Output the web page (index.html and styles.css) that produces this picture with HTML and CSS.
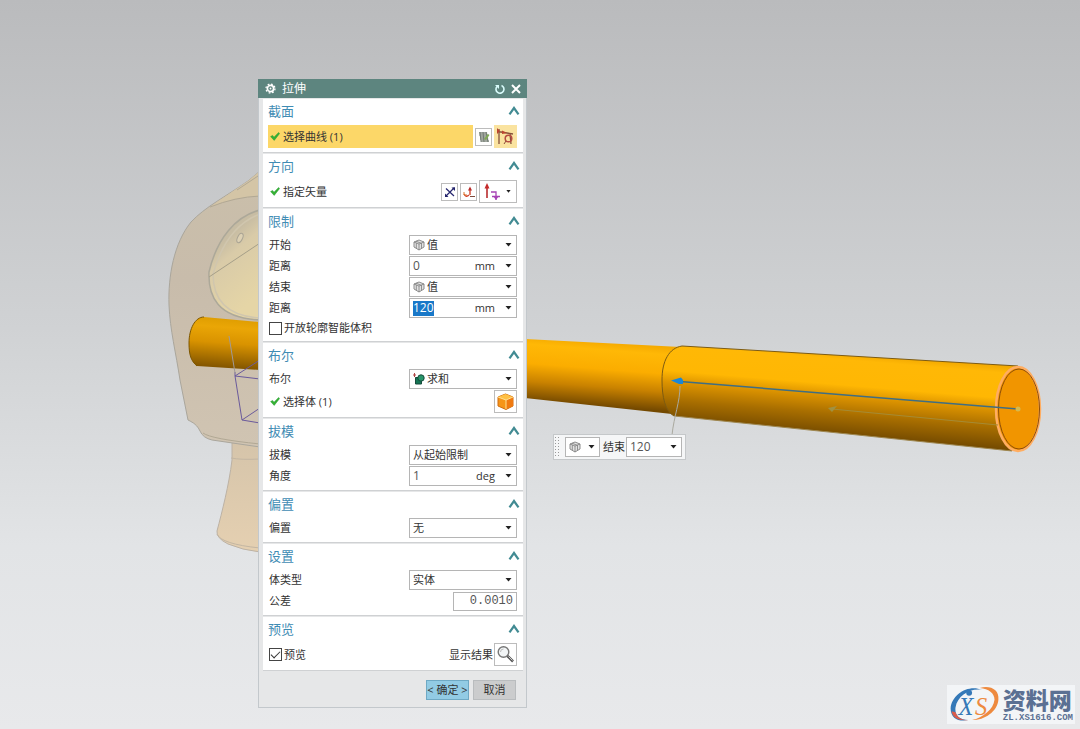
FILE: index.html
```html
<!DOCTYPE html>
<html lang="zh-CN">
<head>
<meta charset="utf-8">
<title>拉伸</title>
<link rel="stylesheet" href="styles.css">
</head>
<body>
<svg class="defs" aria-hidden="true">
  <symbol id="caret" viewBox="0 0 7 4"><path d="M0.5 0h6L3.5 3.6z" fill="#222"/></symbol>
  <symbol id="chev" viewBox="0 0 12 9"><path d="M1.500 8.300 6 2l4.500 6.300" fill="none" stroke="#428b93" stroke-width="2.200"/></symbol>
  <symbol id="check" viewBox="0 0 10 9"><path d="M.6 4.600 2.600 3.400 4 5.200 8.600.5 9.600 1.600 4.200 8.400z" fill="#35b233" stroke="#2a9a36" stroke-width=".5"/></symbol>
  <symbol id="cube" viewBox="0 0 12 12"><path d="M1 3 6 1l5 2v5l-5 3-5-3z" fill="#e2e2e2" stroke="#8c8c8c"/><path d="M1 3l5 2 5-2M6 5v6M3.300 4v5M8.500 4v5M3 2.200l5 2" fill="none" stroke="#7c7c7c" stroke-width=".8"/></symbol>
</svg>

<main class="viewport">
  <svg class="scene" viewBox="0 0 1080 729" preserveAspectRatio="xMinYMin slice" role="img" aria-label="模型视图">
    <defs>
      <linearGradient id="rod" gradientUnits="userSpaceOnUse" x1="854" y1="352" x2="847" y2="436">
        <stop offset="0" stop-color="#efa500"/><stop offset=".1" stop-color="#ffb806"/><stop offset=".4" stop-color="#ffb703"/><stop offset=".54" stop-color="#dc9300"/><stop offset=".75" stop-color="#a86e00"/><stop offset="1" stop-color="#754b00"/>
      </linearGradient>
      <linearGradient id="rod2" gradientUnits="userSpaceOnUse" x1="602" y1="342" x2="597" y2="406">
        <stop offset="0" stop-color="#f5aa00"/><stop offset=".12" stop-color="#ffb806"/><stop offset=".42" stop-color="#fbad00"/><stop offset=".7" stop-color="#c98200"/><stop offset="1" stop-color="#744900"/>
      </linearGradient>
      <linearGradient id="rod3" gradientUnits="userSpaceOnUse" x1="228" y1="317" x2="224" y2="369">
        <stop offset="0" stop-color="#dd9c00"/><stop offset=".2" stop-color="#eaa606"/><stop offset=".5" stop-color="#d99300"/><stop offset="1" stop-color="#7e5200"/>
      </linearGradient>
      <linearGradient id="shell" x1="0" y1="0" x2="0" y2="1">
        <stop offset="0" stop-color="#cabfaa"/><stop offset=".4" stop-color="#c8bcab"/><stop offset="1" stop-color="#d0c4b2"/>
      </linearGradient>
      <linearGradient id="bore" x1="0" y1="0" x2=".4" y2="1">
        <stop offset="0" stop-color="#b9b3a6"/><stop offset=".35" stop-color="#c8bda3"/><stop offset=".5" stop-color="#d9cba8"/><stop offset="1" stop-color="#e5d5a6"/>
      </linearGradient>
      <linearGradient id="neck" x1="0" y1="0" x2="0" y2="1">
        <stop offset="0" stop-color="#d5c4aa"/><stop offset="1" stop-color="#e5d0b1"/>
      </linearGradient>
    </defs>
    <path d="M232 440v20C229 485 222 512 217 531q-1 7 11 13 14 6 32 8V440z" fill="url(#neck)" stroke="#bcb2a5"/>
    <path d="M217 534q4 10 43 14M231 458q10 2 29 1" fill="none" stroke="#c3b6a3"/>
    <path d="M260 171 248 181C225 197 205 207 191 222 174 243 168 276 169 305c1 25 7 48 11 75l8 40c6 3 9 5 12 11q3 7 12 9l48 7z" fill="url(#shell)" stroke="#aaa69c"/>
    <path d="M260 171 248 181C235 190 221 199 210 207q25-10 50-11z" fill="#d4c5a6"/>
    <path d="M210 207q25-10 50-11M203 433q8 6 57 11M258 176l-21 14" fill="none" stroke="#b1a894"/>
    <path d="M260 210c-24 6-43 28-51 62-1 24 8 46 51 48z" fill="url(#bore)" stroke="#aca899" stroke-width="1.500"/>
    <path d="M260 214c-22 8-38 28-47 60 0 24 12 42 47 44" fill="none" stroke="#d0c6ae" stroke-width="1.500"/>
    <path d="M209 277 260 243" stroke="#a69f88"/>
    <ellipse cx="240" cy="238" rx="2.500" ry="5" fill="#ddd1b4" stroke="#aaa494" transform="rotate(25 240 238)"/>
    <path d="M204 317 260 322V370L197 366C191 361 189 355 189 343 189 329 195 317 204 317z" fill="url(#rod3)"/>
    <path d="M204 317c-9 0-15 12-15 26 0 12 2 18 8 23" fill="none" stroke="#7d5600"/>
    <path d="M235 372v4L242 420 260 423M235 376 260 379M235 376 260 360M242 420 260 408" fill="none" stroke="#6a5a9c"/>
    <path d="M229 336 235 373" stroke="#a09a99"/>
    <path d="M525 339 681 347 672 414 525 398z" fill="url(#rod2)"/>
    <path d="M682 346 1018 366 1012 451 674 416C665 411 662 397 662 380 662 361 669 348 682 346z" fill="url(#rod)"/>
    <path d="M674 416C665 411 662 397 662 380 662 361 669 348 682 346L1018 366" fill="none" stroke="#7d5b12"/>
    <path d="M674 416 1012 451" stroke="#9e8750"/>
    <ellipse cx="1018" cy="409" rx="22" ry="42" fill="#f19500" stroke="#ffad61" stroke-width="2.500"/>
    <ellipse cx="1019" cy="409" rx="20.500" ry="40" fill="none" stroke="#8e4d08"/>
    <path d="M680 386C680 402 674 416 672 435" fill="none" stroke="#aaa99f"/>
    <path d="M680 381.500 1018 409" stroke="#3f6e83" stroke-width="1.500"/>
    <path d="M671 380.500 681 377.500 683 380 683 384 679 384z" fill="#1987d8"/>
    <circle cx="1018" cy="409" r="2.500" fill="#d5b94e"/>
    <path d="M832 409 998 425" stroke="#a58b35"/>
    <path d="M828 408 837 406 832 412z" fill="#a09142"/>
  </svg>

  <form class="dialog" aria-label="拉伸">
    <header class="bar">
      <svg class="gear" viewBox="0 0 12 12"><circle cx="6" cy="6" r="3.400" fill="none" stroke="#fff" stroke-width="1.800"/><circle cx="6" cy="6" r="4.900" fill="none" stroke="#fff" stroke-width="1.400" stroke-dasharray="1.900 1.950"/><circle cx="6" cy="6" r="1" fill="#fff"/></svg>
      <h1 class="bar-title">拉伸</h1>
      <button type="button" class="plain" aria-label="重置"><svg class="ico12" viewBox="0 0 12 12"><path d="M3 3.500A4 4 0 1 0 7.500 2.500" fill="none" stroke="#d9fbfb" stroke-width="1.600"/><path d="M1 2h4v4z" fill="#d9fbfb"/></svg></button>
      <button type="button" class="plain" aria-label="关闭"><svg class="ico12" viewBox="0 0 12 12"><path d="m2 2 8 8M10 2 2 10" stroke="#fff" stroke-width="2"/></svg></button>
    </header>

    <section class="group">
      <h2 class="head">截面<button type="button" class="plain" aria-label="折叠截面"><svg class="chev"><use href="#chev"/></svg></button></h2>
      <div class="row tall">
        <div class="pick active"><svg class="tick"><use href="#check"/></svg>选择曲线 (1)</div>
        <button type="button" class="tool small" aria-label="绘制截面"><svg class="ico12" viewBox="0 0 12 12"><path d="M1 1h8l2 10H3z" fill="#c3c8bd"/><path d="M1 2h8M1 4h9M2 6h8M2 8h8M3 10h8M2 1l1 10M5 1l1 10M8 1l2 10" stroke="#5f6863" stroke-width=".7"/><path d="m6 8 4-5 1.500 1L8 9z" fill="#80aa55"/></svg></button>
        <button type="button" class="tool lit" aria-label="曲线"><svg class="ico19" viewBox="0 0 19 19"><path d="M3 2v15M2 4.500 17 7M14 7l1 10" fill="none" stroke="#85513b" stroke-width="1.300"/><path d="M1 1l3 3-3 3zM6 3.500l5 2.500-5 1z" fill="#ba4430"/><circle cx="12.500" cy="11.500" r="3.300" fill="none" stroke="#b54c43" stroke-width="1.500"/><path d="m10 14-2 3" stroke="#8d4a39"/></svg></button>
      </div>
    </section>

    <section class="group">
      <h2 class="head">方向<button type="button" class="plain" aria-label="折叠方向"><svg class="chev"><use href="#chev"/></svg></button></h2>
      <div class="row tall">
        <div class="pick"><svg class="tick"><use href="#check"/></svg>指定矢量</div>
        <button type="button" class="tool small" aria-label="反向"><svg class="ico12" viewBox="0 0 12 12"><path d="M1.500 10.500 10.500 1.500M2 2.500l8 7.500" stroke="#27276f" stroke-width="1.200"/><path d="M7.500 1.500H11V5zM1 7.500V11h3.500z" fill="#22226a"/></svg></button>
        <button type="button" class="tool small" aria-label="矢量对话框"><svg class="ico12" viewBox="0 0 12 12"><path d="M7 2v7M1 8q2 4 5 1" fill="none" stroke="#d2432f" stroke-width="1.400"/><path d="M7 10.500h5" stroke="#7d4a3c"/><path d="M5 4.500 7 .5l2 4z" fill="#b82c2c"/><path d="M1 6v3h3" fill="none" stroke="#db7b32"/></svg></button>
        <button type="button" class="tool wide" aria-label="矢量类型"><svg class="vec" viewBox="0 0 18 18"><path d="M4 3v12" stroke="#b82b2e" stroke-width="1.600"/><path d="M1.500 5.500 4 0l2.500 5.500z" fill="#c52a2a"/><path d="M8 9h5v4M9 13.500h8M13 13v4" fill="none" stroke="#a743b4" stroke-width="1.300"/><path d="M10.500 13.500h5L13 17z" fill="#a743b4"/></svg><svg class="caret dot"><use href="#caret"/></svg></button>
      </div>
    </section>

    <section class="group">
      <h2 class="head">限制<button type="button" class="plain" aria-label="折叠限制"><svg class="chev"><use href="#chev"/></svg></button></h2>
      <div class="row"><label class="name" for="start">开始</label><div class="combo"><svg class="mini"><use href="#cube"/></svg><select class="sel" id="start"><option>值</option></select><svg class="caret"><use href="#caret"/></svg></div></div>
      <div class="row"><label class="name" for="d0">距离</label><div class="combo"><input class="num" id="d0" value="0"><span class="unit">mm</span><button type="button" class="plain" aria-label="距离选项"><svg class="caret"><use href="#caret"/></svg></button></div></div>
      <div class="row"><label class="name" for="end">结束</label><div class="combo"><svg class="mini"><use href="#cube"/></svg><select class="sel" id="end"><option>值</option></select><svg class="caret"><use href="#caret"/></svg></div></div>
      <div class="row"><label class="name" for="d1">距离</label><div class="combo"><input class="num marked" id="d1" value="120"><span class="unit">mm</span><button type="button" class="plain" aria-label="距离选项"><svg class="caret"><use href="#caret"/></svg></button></div></div>
      <div class="row short"><input class="box" type="checkbox" id="open"><label class="name" for="open">开放轮廓智能体积</label></div>
    </section>

    <section class="group">
      <h2 class="head">布尔<button type="button" class="plain" aria-label="折叠布尔"><svg class="chev"><use href="#chev"/></svg></button></h2>
      <div class="row"><label class="name" for="bool">布尔</label><div class="combo"><svg class="mini" viewBox="0 0 12 12"><path d="M2.500 4.500h6v6.500h-6z" fill="#147554" stroke="#174b3b"/><circle cx="8" cy="5" r="3.200" fill="#27956a" stroke="#174b3b"/><path d="M0 2h3M1.500 0v4" stroke="#b04545"/></svg><select class="sel" id="bool"><option>求和</option></select><svg class="caret"><use href="#caret"/></svg></div></div>
      <div class="row tall">
        <div class="pick"><svg class="tick"><use href="#check"/></svg>选择体 (1)</div>
        <button type="button" class="tool" aria-label="选择体"><svg class="ico19" viewBox="0 0 19 19"><path d="M2 5 9.500 2 17 5v9l-7 3.500L2 14z" fill="#f69518" stroke="#cf6d10"/><path d="M2 5 9.500 2 17 5l-7 3z" fill="#ffc044"/><path d="M10 8v9l7-3V5z" fill="#f07a10"/><path d="M2 5l8 3 7-3M10 8v9" fill="none" stroke="#ffe092"/></svg></button>
      </div>
    </section>

    <section class="group">
      <h2 class="head">拔模<button type="button" class="plain" aria-label="折叠拔模"><svg class="chev"><use href="#chev"/></svg></button></h2>
      <div class="row"><label class="name" for="draft">拔模</label><div class="combo"><select class="sel" id="draft"><option>从起始限制</option></select><svg class="caret"><use href="#caret"/></svg></div></div>
      <div class="row"><label class="name" for="angle">角度</label><div class="combo"><input class="num" id="angle" value="1"><span class="unit">deg</span><button type="button" class="plain" aria-label="角度选项"><svg class="caret"><use href="#caret"/></svg></button></div></div>
    </section>

    <section class="group">
      <h2 class="head">偏置<button type="button" class="plain" aria-label="折叠偏置"><svg class="chev"><use href="#chev"/></svg></button></h2>
      <div class="row"><label class="name" for="offset">偏置</label><div class="combo"><select class="sel" id="offset"><option>无</option></select><svg class="caret"><use href="#caret"/></svg></div></div>
    </section>

    <section class="group">
      <h2 class="head">设置<button type="button" class="plain" aria-label="折叠设置"><svg class="chev"><use href="#chev"/></svg></button></h2>
      <div class="row"><label class="name" for="body">体类型</label><div class="combo"><select class="sel" id="body"><option>实体</option></select><svg class="caret"><use href="#caret"/></svg></div></div>
      <div class="row"><label class="name" for="tol">公差</label><input class="tol" id="tol" value="0.0010"></div>
    </section>

    <section class="group">
      <h2 class="head">预览<button type="button" class="plain" aria-label="折叠预览"><svg class="chev"><use href="#chev"/></svg></button></h2>
      <div class="row tall last">
        <input class="box" type="checkbox" id="preview" checked><label class="name" for="preview">预览</label>
        <label class="show" for="result">显示结果</label>
        <button type="button" class="tool" id="result"><svg class="ico19" viewBox="0 0 19 19"><circle cx="7.500" cy="7" r="5.300" fill="#f2f5f6" stroke="#777" stroke-width="1.400"/><path d="M4.500 7a3 3 0 0 1 3-3" fill="none" stroke="#bbb"/><path d="m11.500 11 5.500 5.500" stroke="#555" stroke-width="2.600"/><path d="m12.500 11.500 4 4" stroke="#ccc"/></svg></button>
      </div>
    </section>

    <footer class="actions">
      <button type="submit" class="btn primary">&lt; 确定 &gt;</button>
      <button type="button" class="btn">取消</button>
    </footer>
  </form>

  <div class="float">
    <span class="grip"></span>
    <button type="button" class="combo type" aria-label="限制类型"><svg class="mini"><use href="#cube"/></svg><svg class="caret"><use href="#caret"/></svg></button>
    <label class="name" for="live">结束</label>
    <div class="combo live"><input class="num" id="live" value="120"><button type="button" class="plain" aria-label="结束选项"><svg class="caret"><use href="#caret"/></svg></button></div>
  </div>

  <a class="mark" href="#">
    <svg class="logo" viewBox="0 0 56 40" aria-hidden="true">
      <path d="M35 5C22-1 4 9 3 24c0 10 8 14 18 12C12 36 7 31 8 23 10 11 23 3 35 5z" fill="#3579b8"/>
      <path d="M33 3c11-3 20 2 19 12-1 12-14 21-27 21 11-3 22-11 23-21 0-7-6-11-15-12z" fill="#ee8a3f"/>
      <path d="M4 27c1 7 8 10 17 9-6 0-11-2-13-8z" fill="#dc5d4c"/>
      <circle cx="22" cy="8" r="3" fill="#3579b8"/>
      <text class="logo-x" x="11" y="31">X</text><text class="logo-s" x="28" y="31">S</text>
    </svg>
    <span class="mark-text"><span class="mark-name">资料网</span><span class="mark-url">ZL.XS1616.COM</span></span>
  </a>
</main>
</body>
</html>
```
FILE: styles.css
```css
* { box-sizing: border-box; }

body {
  margin: 0;
  font: 11px/16px "Open Sans", "Noto Sans CJK SC", sans-serif;
  color: #333;
}

h1, h2 { margin: 0; font-weight: 400; }
svg { display: block; flex: none; }
input, select, button { font: inherit; color: inherit; }
.defs { position: absolute; width: 0; height: 0; }

.viewport {
  position: relative;
  min-height: 100vh;
  overflow: hidden;
  background: linear-gradient(#babbbd, #d0d2d4 45%, #e2e4e6 75%, #e8e9eb);
}
.scene { position: absolute; inset: 0; width: 100%; height: 100%; }

/* Dialog window */
.dialog {
  position: absolute;
  left: 258px;
  top: 79px;
  width: 269px;
  border: 1px solid #c3c8cc;
  border-top: 0;
  background: #e6e7e8;
}
.bar {
  display: flex;
  align-items: center;
  gap: 4px;
  height: 19px;
  margin: 0 -1px 1px;
  padding: 0 5px 0 7px;
  background: #5d857f;
  color: #fff;
}
.bar-title { flex: 1; padding-left: 2px; font-size: 12px; line-height: 18px; }
.gear { width: 11px; height: 11px; }
.ico12 { width: 12px; height: 12px; }
.ico19 { width: 19px; height: 19px; }
.plain { padding: 0; border: 0; background: none; }

.group {
  display: flex;
  flex-direction: column;
  gap: 1px;
  margin: 0 3px 2px 4px;
  padding: 0 6px 4px 5px;
  background: #fff;
  box-shadow: 0 1px #cfd1d3;
}
.head {
  display: flex;
  align-items: center;
  justify-content: space-between;
  height: 25px;
  margin-right: -3px;
  padding-bottom: 2px;
  font-size: 13px;
  color: #3f8cb4;
}
.chev { width: 12px; height: 9px; }

.row { display: flex; align-items: center; height: 20px; }
.tall { height: 23px; gap: 2px; }
.short { height: 18px; }
.name { flex: 1; padding-left: 1px; white-space: nowrap; }
.last .name { padding-left: 0; }
.last { gap: 1px; }
.pick {
  flex: 1;
  display: flex;
  align-items: center;
  gap: 3px;
  height: 23px;
  padding-left: 2px;
}
.active { background: #fcd768; }
.tick { width: 10px; height: 9px; }

.tool {
  display: grid;
  place-items: center;
  width: 23px;
  height: 23px;
  padding: 0;
  border: 1px solid #bcbcbc;
  background: #fff;
}
.small { width: 17px; height: 18px; }
.lit { border-color: #fae3a0; background: #fae3a0; }
.wide {
  display: flex;
  align-items: center;
  justify-content: space-between;
  width: 38px;
  padding: 0 5px 0 3px;
}
.vec { width: 18px; height: 18px; }

.combo {
  display: flex;
  align-items: center;
  width: 108px;
  height: 20px;
  padding: 0 4px 0 3px;
  border: 1px solid #b5b5b5;
  background: #fff;
}
.mini { width: 12px; height: 12px; margin-right: 2px; }
.sel {
  flex: 1;
  min-width: 0;
  padding: 0;
  border: 0;
  appearance: none;
  background: none;
}
.caret { width: 7px; height: 4px; }
.dot { width: 5px; height: 3px; }
.num {
  width: 21px;
  height: 15px;
  padding: 0;
  border: 0;
  background: none;
  font-size: 12px;
  color: #555;
}
.marked { background: #1978c8; color: #fff; }
.unit { flex: 1; padding-right: 10px; text-align: right; }
.tol {
  width: 64px;
  height: 19px;
  padding: 0 3px;
  border: 1px solid #b5b5b5;
  text-align: right;
  font: 12px "Liberation Mono", monospace;
  color: #555;
}

.box {
  display: grid;
  place-items: center;
  width: 13px;
  height: 13px;
  margin: 0 1px;
  border: 1px solid #444;
  appearance: none;
  background: #fff;
}
.box:checked::after {
  content: "";
  width: 8px;
  height: 4px;
  margin-bottom: 3px;
  border: solid #333;
  border-width: 0 0 1px 1px;
  transform: rotate(-45deg);
}

.actions {
  display: flex;
  justify-content: flex-end;
  gap: 4px;
  padding: 8px 10px 7px;
}
.btn {
  width: 43px;
  height: 20px;
  padding: 0;
  border: 1px solid #b9bcbe;
  background: #cbcccd;
  white-space: nowrap;
}
.primary { border-color: #6fa9c4; background: #92cbe4; }

/* On-canvas input */
.float {
  position: absolute;
  left: 553px;
  top: 434px;
  display: flex;
  align-items: center;
  height: 26px;
  padding-right: 3px;
  border: 1px solid #c5c8ca;
  background: #f5f6f7;
}
.float .name { padding: 0 1px 0 3px; }
.grip {
  width: 6px;
  height: 22px;
  margin-right: 5px;
  background: radial-gradient(circle, #999 1px, transparent 1px) 0 0 / 3px 3px;
}
.type { width: 35px; justify-content: space-between; }
.live { width: 56px; justify-content: space-between; }

/* Site mark */
.mark {
  position: absolute;
  right: 5px;
  bottom: 5px;
  display: flex;
  align-items: center;
  height: 39px;
  padding-right: 2px;
  background: #f3f5f7;
  color: #5b7093;
  text-decoration: none;
}
.logo { width: 56px; height: 39px; }
.logo-x, .logo-s { font: italic 25px "Liberation Serif", serif; }
.logo-x { fill: #3579b8; }
.logo-s { fill: #ee8a3f; }
.mark-text { display: flex; flex-direction: column; }
.mark-name { font: 900 23px/27px "Noto Sans CJK SC", sans-serif; }
.mark-url { font: bold 9px/10px "Liberation Mono", monospace; }
```
